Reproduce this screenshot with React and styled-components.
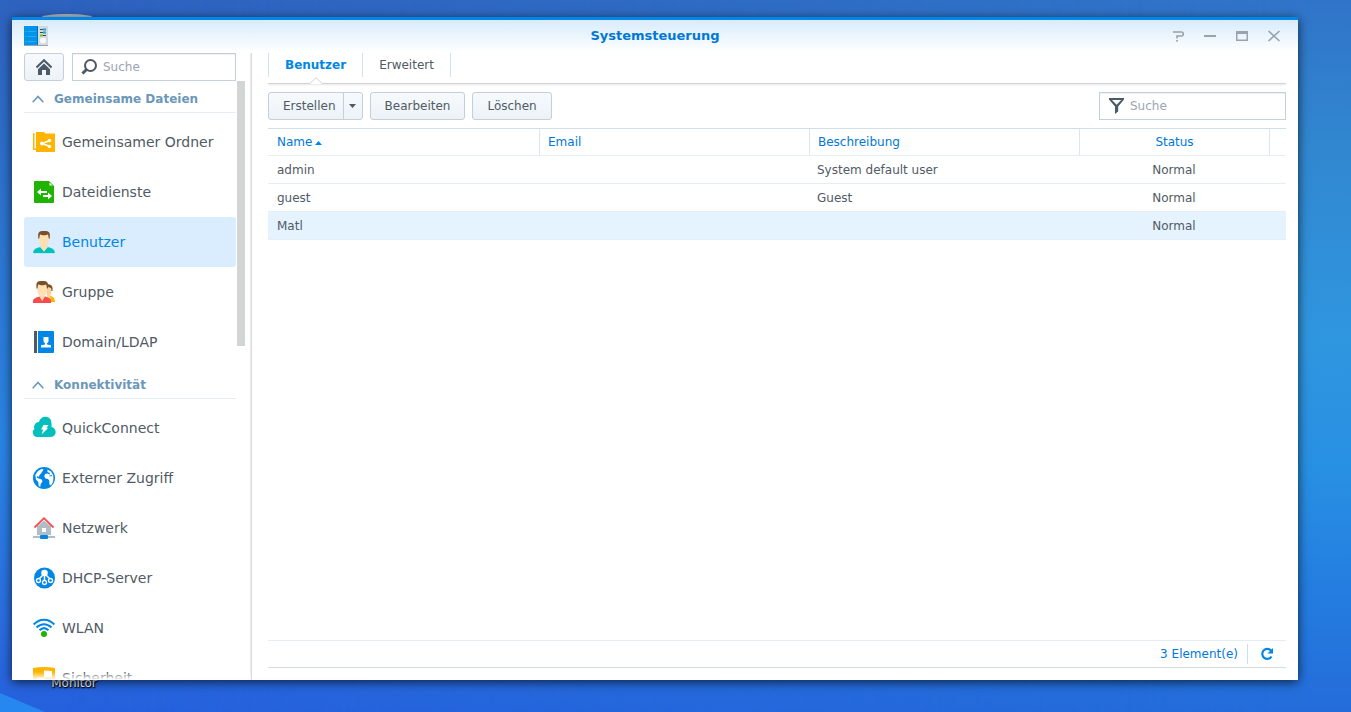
import React, { useState } from 'react';
import styled, { createGlobalStyle, css } from 'styled-components';

const GlobalStyle = createGlobalStyle`
    * {
        box-sizing: border-box;
    }

    body {
        margin: 0;
        overflow: hidden;
        font-family: Verdana, "DejaVu Sans", sans-serif;
        font-size: 12px;
        color: #505a64;
    }

    button, input {
        font: inherit;
        color: inherit;
    }
`;

const Desktop = styled.div`
    position: relative;
    height: 100vh;
    overflow: hidden;
    background:
        linear-gradient(23deg, #2687f0 0, #2687f0 17px, transparent 18px),
        linear-gradient(180deg, #2e62bf 0%, #2d72cc 27%, #2a84e4 63%, #2a6ade 90%, #2560dd 100%);

    &::before {
        content: '';
        position: absolute;
        inset: 0;
        background: linear-gradient(180deg, #3074c9 0%, #3187d0 20%, #2f96df 47%, #2890e3 66%, #247ee0 82%, #246cda 100%);
        mask-image: linear-gradient(90deg, transparent 5%, #000 95%);
    }
`;

const Shortcut = styled.div`
    position: absolute;
    left: 26px;
    top: 14px;
    bottom: 21px;
    width: 96px;
    display: flex;
    flex-direction: column;
    justify-content: space-between;
    align-items: center;
    color: #fff;
    line-height: 16px;
    text-shadow: 1px 1px 1px #000, 0 1px 2px #000;
`;

const ShortcutImage = styled.div`
    width: 50px;
    height: 6px;
    margin-right: 14px;
    border-radius: 50%;
    background: #b9bfc6;
`;

const Window = styled.div`
    position: absolute;
    top: 17px;
    right: 53px;
    bottom: 32px;
    left: 12px;
    display: flex;
    flex-direction: column;
    border-top: 3px solid #0086e5;
    background: linear-gradient(#d8ebfa, #fff 32px);
    box-shadow: 0 2px 10px rgba(0, 0, 0, 0.7);
`;

const TitleBar = styled.header`
    display: grid;
    grid-template-columns: 1fr auto 1fr;
    align-items: center;
    height: 33px;
    padding: 0 16px 2px;
`;

const AppIcon = styled.svg`
    margin-left: -4px;
`;

const Title = styled.h1`
    margin: 0;
    font-size: 13px;
    color: #0078d7;
`;

const WindowControls = styled.div`
    display: flex;
    justify-content: flex-end;
    gap: 16px;
`;

const ControlButton = styled.button`
    width: 16px;
    height: 16px;
    padding: 0;
    border: 0;
    background: none;

    svg {
        display: block;
    }
`;

const Body = styled.div`
    flex: 1;
    display: flex;
    min-height: 0;
`;

const Sidebar = styled.aside`
    flex: none;
    width: 240px;
    display: flex;
    flex-direction: column;
    padding-left: 12px;
    border-right: 1px solid #dcdcdc;
    box-shadow: inset -2px 0 1px -1px #ececec;
`;

const SidebarTop = styled.div`
    display: flex;
    gap: 8px;
    width: 212px;
`;

const Button = styled.button`
    display: flex;
    align-items: center;
    justify-content: center;
    height: 28px;
    padding: 0 14px;
    border: 1px solid #c3cfdb;
    border-radius: 3px;
    background: linear-gradient(#f6fafd, #edf2f7);
    white-space: nowrap;

    ${({ $icon }) => $icon && css`
        width: 40px;
        padding: 0;
    `}
`;

const SearchBox = styled.label`
    display: flex;
    align-items: center;
    gap: 4px;
    flex: ${({ $width }) => ($width ? 'none' : 1)};
    width: ${({ $width }) => $width || 'auto'};
    min-width: 0;
    height: 28px;
    padding: 0 8px;
    border: 1px solid #c3cfdb;
    background: #fff;
    box-shadow: inset 0 1px 1px #eef1f4;

    svg {
        flex: none;
    }
`;

const SearchInput = styled.input`
    flex: 1;
    min-width: 0;
    padding: 0;
    border: 0;
    outline: none;
    background: none;

    &::placeholder {
        color: #9aa5af;
        opacity: 1;
    }
`;

const NavArea = styled.div`
    position: relative;
    flex: 1;
    display: flex;
    align-items: flex-start;
    gap: 1px;
    min-height: 0;
    overflow: hidden;

    &::after {
        content: '';
        position: absolute;
        right: 0;
        bottom: 0;
        left: 0;
        height: 8px;
        background: linear-gradient(rgba(255, 255, 255, 0), #fff);
    }
`;

const Nav = styled.nav`
    width: 212px;
`;

const ScrollThumb = styled.div`
    width: 8px;
    height: 265px;
    background: #d3d4d6;
`;

const SectionHeader = styled.button`
    display: flex;
    align-items: center;
    gap: 10px;
    width: 100%;
    height: 28px;
    margin: 4px 0;
    padding: 0 8px;
    border: 0;
    border-bottom: 1px solid #e6ecf1;
    background: none;
    font-weight: bold;
    color: #6b97b8;
`;

const NavItem = styled.a`
    display: flex;
    align-items: center;
    gap: 7px;
    height: 50px;
    padding: 0 9px;
    border-radius: 3px;
    font-size: 14px;
    text-decoration: none;
    color: ${({ $active }) => ($active ? '#0086e5' : '#505a64')};
    background: ${({ $active }) => ($active ? '#d9edff' : 'none')};

    svg {
        flex: none;
        overflow: visible;
    }
`;

const Main = styled.main`
    flex: 1;
    display: flex;
    flex-direction: column;
    min-width: 0;
    padding: 0 12px 12px 16px;
`;

const Tabs = styled.div`
    display: flex;
    align-items: flex-start;
    height: 31px;
    border-bottom: 1px solid #d0d4d8;
    box-shadow: 0 2px 2px -1px #e8e8e8;
`;

const Tab = styled.button`
    position: relative;
    height: 24px;
    padding: 0 16px;
    border: 0;
    border-right: 1px solid #d5e0ea;
    background: none;

    &:first-child {
        border-left: 1px solid #d5e0ea;
    }

    ${({ $active }) => $active && css`
        font-weight: bold;
        color: #0086e5;
    `}
`;

const TabPointer = styled.svg`
    position: absolute;
    top: 24px;
    left: calc(50% - 7px);
`;

const Toolbar = styled.div`
    display: flex;
    align-items: center;
    gap: 7px;
    margin: 8px 0;
`;

const SplitButton = styled.div`
    display: flex;

    ${Button}:first-child {
        padding-right: 7px;
        border-radius: 3px 0 0 3px;
    }

    ${Button}:last-child {
        width: 20px;
        margin-left: -1px;
        padding: 0;
        border-radius: 0 3px 3px 0;
    }
`;

const Spacer = styled.div`
    flex: 1;
`;

const TableArea = styled.div`
    flex: 1;
    min-height: 0;
    overflow: hidden;
    border-top: 1px solid #d0deea;
`;

const Table = styled.table`
    width: 100%;
    table-layout: fixed;
    border-collapse: separate;
    border-spacing: 0;

    th:first-child, td:first-child {
        padding-left: 9px;
    }
`;

const HeadCell = styled.th`
    width: ${({ $width }) => $width || 'auto'};
    height: 27px;
    padding: 0 8px;
    border-right: ${({ $last }) => ($last ? 0 : '1px solid #dbe6ef')};
    border-bottom: 1px solid #e8edf1;
    font-weight: normal;
    text-align: ${({ $align }) => $align || 'left'};
    color: #0078d7;
`;

const SortArrow = styled.svg`
    margin-left: 3px;
    vertical-align: 1px;
`;

const Cell = styled.td`
    height: 28px;
    padding: 0 9px 0 7px;
    border-bottom: 1px solid #e8edf1;
    text-align: ${({ $align }) => $align || 'left'};
`;

const Row = styled.tr`
    background: ${({ $selected }) => ($selected ? '#e5f3ff' : 'none')};
`;

const Footer = styled.footer`
    display: flex;
    align-items: center;
    justify-content: flex-end;
    height: 28px;
    border-top: 1px solid #e3edf5;
    border-bottom: 1px solid #d0deea;
    color: #0078d7;
`;

const RefreshButton = styled.button`
    display: flex;
    align-items: center;
    justify-content: center;
    width: 39px;
    height: 20px;
    margin-left: 9px;
    padding: 0;
    border: 0;
    border-left: 1px solid #d0deea;
    background: none;
`;

const ControlPanelIcon = () => (
    <AppIcon width="24" height="20" viewBox="0 0 24 20">
        <rect x="13" width="11" height="20" fill="#d3d9de" />
        <rect y="19" width="24" height="1" fill="#9aa4ac" />
        <rect width="14" height="19" fill="#0095ea" />
        <rect x="13" width="1" height="19" fill="#0072c9" />
        <path d="M1 5.5h1.500M4 5.500h8M1 10.500h1.500M4 10.500h8M1 15.500h1.500M4 15.500h8" stroke="#25aef2" />
        <path d="M16 3.500h3M16 6.500h3M19 9.500h3" stroke="#3f464c" />
        <path d="M19 3.500h3M19 6.500h3" stroke="#16a8e0" strokeWidth="2" />
        <path d="M16 9.500h3" stroke="#7ac800" strokeWidth="2" />
        <circle cx="19" cy="14.500" r="3" fill="#f5fafc" />
    </AppIcon>
);

const HomeIcon = () => (
    <svg width="16" height="16" viewBox="0 0 16 16">
        <path d="M0.500 8.500L8 1.200l7.500 7.300" fill="none" stroke="#4c5966" strokeWidth="2" />
        <path d="M2 10.200L8 4.500l6 5.700V16h-4v-5H6v5H2z" fill="#4c5966" />
    </svg>
);

const SearchIcon = () => (
    <svg width="18" height="18" viewBox="0 0 18 18" fill="none" stroke="#4c5966">
        <circle cx="9.500" cy="7.500" r="5.500" strokeWidth="2" />
        <path d="M5.800 11.200L1.500 15.500" strokeWidth="3" />
    </svg>
);

const FilterIcon = () => (
    <svg width="18" height="18" viewBox="0 0 18 18">
        <path d="M1 1h15v1.500L10.200 9.500v5L7 17V9.500L1 2.500z" fill="#4c5966" />
        <path d="M4 3h9.200L8.600 7.800z" fill="#fff" />
    </svg>
);

const ChevronUp = () => (
    <svg width="12" height="8" viewBox="0 0 12 8" fill="none" stroke="#6b97b8" strokeWidth="1.600">
        <path d="M0.700 7.300L6 1.500l5.300 5.800" />
    </svg>
);

const NavIcon = ({ children }) => (
    <svg width="22" height="22" viewBox="0 0 22 22">{children}</svg>
);

const sections = [
    {
        title: 'Gemeinsame Dateien',
        items: [
            {
                label: 'Gemeinsamer Ordner',
                icon: (
                    <NavIcon>
                        <path d="M0 2h1.500v15.500H3V19H0z" fill="#ffb400" />
                        <path d="M3 1h8l1.500 1.500H22V21H3z" fill="#ffb400" />
                        <path d="M17 9.500l-8 3 8 3" fill="none" stroke="#fff" strokeWidth="1.500" />
                        <circle cx="9" cy="12.500" r="2" fill="#fff" />
                        <circle cx="16.500" cy="9.500" r="1.700" fill="#fff" />
                        <circle cx="16.500" cy="15.500" r="1.700" fill="#fff" />
                    </NavIcon>
                ),
            },
            {
                label: 'Dateidienste',
                icon: (
                    <NavIcon>
                        <path d="M2 0h14l5 5v16a1 1 0 0 1-1 1H2a1 1 0 0 1-1-1V1a1 1 0 0 1 1-1z" fill="#1eb400" />
                        <path d="M16.500 1.500v3h3z" fill="#fff" />
                        <path d="M4 11l4-3.500V10h6v2H8v2.500zM19 15l-4-3.500V14h-5v2h5v2.500z" fill="#fff" />
                    </NavIcon>
                ),
            },
            {
                label: 'Benutzer',
                active: true,
                icon: (
                    <NavIcon>
                        <path d="M0 22.500c-.5-4 2-5.500 8-7h6c6 1.500 8.500 3 8 7z" fill="#00bfbd" stroke="#fff" strokeWidth="0.500" />
                        <path d="M8.500 12h5v4L11 20.500 8.500 16z" fill="#fbd9a8" />
                        <path d="M7 16l4 4.500 4-4.500" fill="#ffe0b2" />
                        <path d="M6 4h10v4c0 4-2 8-5 8S6 12 6 8z" fill="#ffe0b2" />
                        <path d="M5.200 7.500V3.500c0-2.500 2-3.500 4-3.500h3.600c2.500 0 4 1.200 4 3.500v4h-1L15 3.500c-2 1-6 1-8 0L6.200 7.500z" fill="#7a4f2a" />
                    </NavIcon>
                ),
            },
            {
                label: 'Gruppe',
                icon: (
                    <NavIcon>
                        <path d="M15 16l3-1c3 1 4 3 4 6h-4z" fill="#ffb400" />
                        <path d="M13 5h5.500v5c0 3-1 5-2 5.500L18 17l-1 2-3-3z" fill="#fbd19a" />
                        <path d="M13 3.500c3-1 6.500 0 6.500 3.500v3h-1l-.5-3-3-1z" fill="#7a4f2a" />
                        <path d="M0 22c-.5-4 1-5 7-6.500h5c5 1.500 6.500 2.500 6 6.500z" fill="#f84c4c" />
                        <path d="M6.500 15.500l2.700 4.500 2.800-4.500z" fill="#ffe0b2" />
                        <path d="M4.200 4h10v4c0 4-2 8-5 8s-5-4-5-8z" fill="#ffe0b2" />
                        <path d="M3.400 7.500V3.500C3.400 1 5.500 0 7.500 0H11c2.500 0 4 1.200 4 3.500v4h-1l-.8-4c-2 1-6 1-8 0l-.8 4z" fill="#7a4f2a" />
                    </NavIcon>
                ),
            },
            {
                label: 'Domain/LDAP',
                icon: (
                    <NavIcon>
                        <path d="M1 0h3v22H1z" fill="#4c5966" />
                        <path d="M5 0h15a1 1 0 0 1 1 1v20a1 1 0 0 1-1 1H5z" fill="#0086e5" />
                        <path d="M10.500 6h5v4.500L14 12.500v1l4 .8V16.500H8v-2.200l4-.8v-1l-1.500-2z" fill="#fff" />
                    </NavIcon>
                ),
            },
        ],
    },
    {
        title: 'Konnektivität',
        items: [
            {
                label: 'QuickConnect',
                icon: (
                    <NavIcon>
                        <path d="M4.500 20a4.500 4.500 0 0 1-3-8A5 5 0 0 1 6 5a6.300 6.300 0 0 1 12.500 2c.3 1 .2 2-.2 3A5 5 0 0 1 17 20z" fill="#00bfbd" />
                        <path d="M10.500 8h5l-2 3.200H15L8.500 17.500l1.700-5H8z" fill="#fff" />
                    </NavIcon>
                ),
            },
            {
                label: 'Externer Zugriff',
                icon: (
                    <NavIcon>
                        <circle cx="11" cy="11" r="11" fill="#0086e5" />
                        <path d="M5 4l4-2.300 1.500 1L9.300 4.500 8 6.500 6.500 8l-.7 2L4.500 9l-.8 1.500 2 1 3 1 .8 2-1.800 2.500-.5 3-1.500-1-.4-4-2.300-2.500L2.300 8z" fill="#fff" />
                        <path d="M14.500 2.500l3.500 2 2 3.500.5 2.500-.5 4.500-2 3.500-1.500-1-.3-4-1.200-1.500-2.500-.5-1.200-2L12 7l2.500-.5 2 1 .5-1.500-2.500-1z" fill="#fff" />
                        <path d="M16.500 9l2.500-.5" stroke="#0086e5" />
                    </NavIcon>
                ),
            },
            {
                label: 'Netzwerk',
                icon: (
                    <NavIcon>
                        <path d="M4 9.500L11 3.500l7 6V18H4z" fill="#b1bcc6" />
                        <path d="M1.500 10.500L11 1.200l9.500 9.300" fill="none" stroke="#f84c4c" strokeWidth="1.800" />
                        <path d="M9 11h4v4H9z" fill="#fff" />
                        <path d="M0 19h22v2H0z" fill="#b1bcc6" />
                        <rect x="7" y="18" width="8" height="4" rx="1" fill="#0086e5" />
                    </NavIcon>
                ),
            },
            {
                label: 'DHCP-Server',
                icon: (
                    <NavIcon>
                        <circle cx="11.500" cy="11" r="10.500" fill="#0086e5" />
                        <circle cx="11.500" cy="6" r="3.300" fill="#fff" />
                        <path d="M10 8L6 12M11.500 8v6M13 8l4 4" stroke="#fff" strokeWidth="1.500" />
                        <g fill="#0086e5" stroke="#fff" strokeWidth="1.300">
                            <circle cx="5.500" cy="13.500" r="2" />
                            <circle cx="11.500" cy="15.500" r="2" />
                            <circle cx="17.500" cy="13.500" r="2" />
                        </g>
                    </NavIcon>
                ),
            },
            {
                label: 'WLAN',
                icon: (
                    <NavIcon>
                        <g fill="none" stroke="#0086e5" strokeWidth="2">
                            <path d="M0.700 7.500C6.500 1 15.500 1 21.300 7.500" />
                            <path d="M3.500 10.500c4.500-4.500 10.500-4.500 15 0" />
                            <path d="M6.500 13.300c2.800-2.700 6.200-2.700 9 0" />
                        </g>
                        <circle cx="11" cy="17" r="3" fill="#1eb400" />
                    </NavIcon>
                ),
            },
            {
                label: 'Sicherheit',
                icon: (
                    <NavIcon>
                        <path d="M0 1C7-.5 15-.5 22 1v11c0 5-5 8-11 10C5 20 0 17 0 12z" fill="#ffb400" />
                        <path d="M11 3.500l8 .5v6.500h-8zM4 10.500h7V19c-4-1.500-7-4-7-8z" fill="#fff" />
                    </NavIcon>
                ),
            },
        ],
    },
];

const users = [
    { name: 'admin', email: '', description: 'System default user', status: 'Normal' },
    { name: 'guest', email: '', description: 'Guest', status: 'Normal' },
    { name: 'Matl', email: '', description: '', status: 'Normal' },
];

const tabs = ['Benutzer', 'Erweitert'];

const UserTable = () => {
    const [selected, setSelected] = useState('Matl');

    return (
        <Table>
            <thead>
                <tr>
                    <HeadCell $width="272px">
                        Name
                        <SortArrow width="7" height="4" viewBox="0 0 7 4"><path d="M0 4l3.500-4L7 4z" fill="#0086e5" /></SortArrow>
                    </HeadCell>
                    <HeadCell $width="270px">Email</HeadCell>
                    <HeadCell $width="270px">Beschreibung</HeadCell>
                    <HeadCell $width="190px" $align="center">Status</HeadCell>
                    <HeadCell $last />
                </tr>
            </thead>
            <tbody>
                {users.map((user) => (
                    <Row key={user.name} $selected={user.name === selected} onClick={() => setSelected(user.name)}>
                        <Cell>{user.name}</Cell>
                        <Cell>{user.email}</Cell>
                        <Cell>{user.description}</Cell>
                        <Cell $align="center">{user.status}</Cell>
                        <Cell />
                    </Row>
                ))}
            </tbody>
        </Table>
    );
};

const App = () => {
    const [tab, setTab] = useState('Benutzer');

    return (
        <Desktop>
            <GlobalStyle />
            <Shortcut>
                <ShortcutImage />
                Monitor
            </Shortcut>
            <Window>
                <TitleBar>
                    <ControlPanelIcon />
                    <Title>Systemsteuerung</Title>
                    <WindowControls>
                        <ControlButton aria-label="Hilfe">
                            <svg width="16" height="16" viewBox="0 0 16 16" fill="none" stroke="#98a3ad" strokeWidth="1.600">
                                <path d="M3 4h8.500c2.300 0 2.300 4 0 4H7v2.500M7 12v1.800" />
                            </svg>
                        </ControlButton>
                        <ControlButton aria-label="Minimieren">
                            <svg width="16" height="16" viewBox="0 0 16 16"><path d="M2 7h12v2H2z" fill="#98a3ad" /></svg>
                        </ControlButton>
                        <ControlButton aria-label="Maximieren">
                            <svg width="16" height="16" viewBox="0 0 16 16"><path d="M2 3h12v10H2zM3.500 6v5.500h9V6z" fill="#98a3ad" fillRule="evenodd" /></svg>
                        </ControlButton>
                        <ControlButton aria-label="Schließen">
                            <svg width="16" height="16" viewBox="0 0 16 16"><path d="M2.500 3l11 10M13.500 3l-11 10" stroke="#98a3ad" strokeWidth="1.600" /></svg>
                        </ControlButton>
                    </WindowControls>
                </TitleBar>
                <Body>
                    <Sidebar>
                        <SidebarTop>
                            <Button $icon aria-label="Startseite"><HomeIcon /></Button>
                            <SearchBox>
                                <SearchIcon />
                                <SearchInput type="text" placeholder="Suche" aria-label="Suche" />
                            </SearchBox>
                        </SidebarTop>
                        <NavArea>
                            <Nav>
                                {sections.map((section) => (
                                    <React.Fragment key={section.title}>
                                        <SectionHeader>
                                            <ChevronUp />
                                            {section.title}
                                        </SectionHeader>
                                        {section.items.map((item) => (
                                            <NavItem key={item.label} href="#" $active={item.active}>
                                                {item.icon}
                                                {item.label}
                                            </NavItem>
                                        ))}
                                    </React.Fragment>
                                ))}
                            </Nav>
                            <ScrollThumb />
                        </NavArea>
                    </Sidebar>
                    <Main>
                        <Tabs role="tablist">
                            {tabs.map((name) => (
                                <Tab
                                    key={name}
                                    role="tab"
                                    aria-selected={name === tab}
                                    $active={name === tab}
                                    onClick={() => setTab(name)}
                                >
                                    {name}
                                    {name === tab && (
                                        <TabPointer width="14" height="7" viewBox="0 0 14 7">
                                            <path d="M0 6.500L7 0l7 6.500V7H0z" fill="#fff" />
                                            <path d="M0 6.500h1L7 .7l6 5.800h1" fill="none" stroke="#d0d4d8" />
                                        </TabPointer>
                                    )}
                                </Tab>
                            ))}
                        </Tabs>
                        <Toolbar>
                            <SplitButton>
                                <Button>Erstellen</Button>
                                <Button aria-label="Weitere Optionen">
                                    <svg width="7" height="4" viewBox="0 0 7 4"><path d="M0 0h7L3.500 4z" fill="#4c5966" /></svg>
                                </Button>
                            </SplitButton>
                            <Button>Bearbeiten</Button>
                            <Button>Löschen</Button>
                            <Spacer />
                            <SearchBox $width="187px">
                                <FilterIcon />
                                <SearchInput type="text" placeholder="Suche" aria-label="Benutzer filtern" />
                            </SearchBox>
                        </Toolbar>
                        <TableArea>
                            <UserTable />
                        </TableArea>
                        <Footer>
                            3 Element(e)
                            <RefreshButton aria-label="Aktualisieren">
                                <svg width="14" height="14" viewBox="0 0 14 14">
                                    <path d="M11.500 9.500a5 5 0 1 1-.5-6" fill="none" stroke="#0086e5" strokeWidth="2.200" />
                                    <path d="M13 1v5.500H7.500z" fill="#0086e5" />
                                </svg>
                            </RefreshButton>
                        </Footer>
                    </Main>
                </Body>
            </Window>
        </Desktop>
    );
};

export default App;
